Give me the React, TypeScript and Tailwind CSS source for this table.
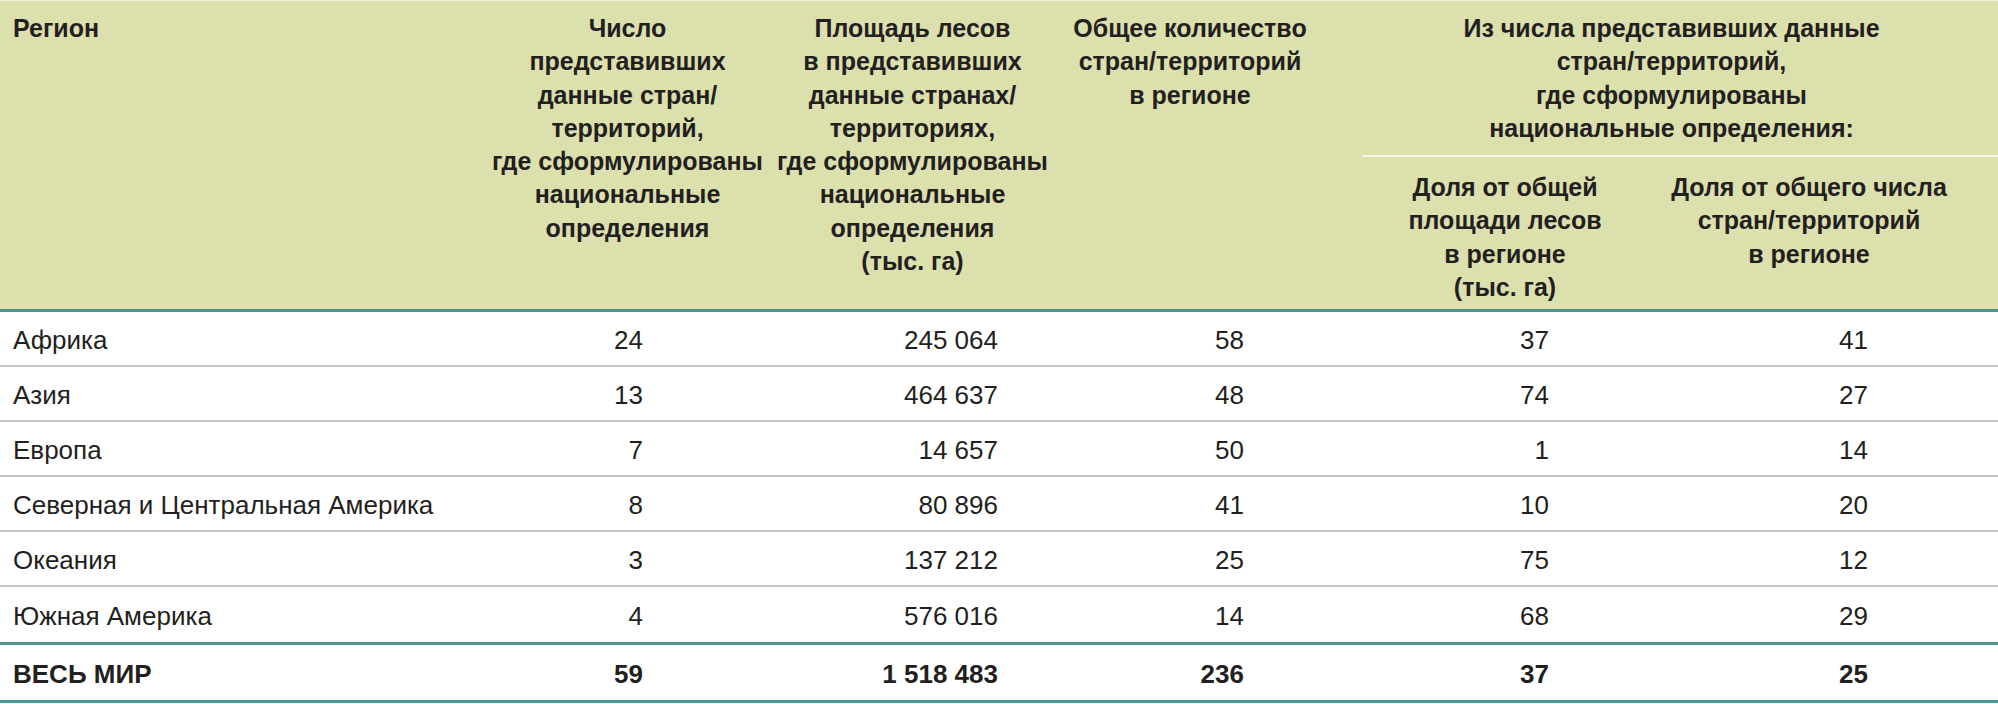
import React from 'react'

const rows = [
  ['Африка', '24', '245 064', '58', '37', '41'],
  ['Азия', '13', '464 637', '48', '74', '27'],
  ['Европа', '7', '14 657', '50', '1', '14'],
  ['Северная и Центральная Америка', '8', '80 896', '41', '10', '20'],
  ['Океания', '3', '137 212', '25', '75', '12'],
  ['Южная Америка', '4', '576 016', '14', '68', '29'],
]

const total = ['ВЕСЬ МИР', '59', '1 518 483', '236', '37', '25']

// widths of the six columns and the right padding that lines the figures up
const cols = [
  'w-[490px] pl-[13px] text-left',
  'w-[275px] pr-[122px] text-right',
  'w-[295px] pr-[62px] text-right',
  'w-[285px] pr-[101px] text-right',
  'w-[320px] pr-[116px] text-right',
  'w-[333px] pr-[130px] text-right',
]

function Row({ cells, bold, last }: { cells: string[]; bold?: boolean; last?: boolean }) {
  return (
    <div
      className={`flex h-[55px] items-center ${
        last ? '' : 'border-b-2 border-[#c4c4c4]'
      } ${bold ? 'font-bold' : ''}`}
    >
      {cells.map((c, i) => (
        <div key={i} className={`${cols[i]} pt-[3px]`}>
          {c}
        </div>
      ))}
    </div>
  )
}

export default function App() {
  return (
    <div className="w-[1998px] h-[704px] bg-[#fbf6e9] font-['Liberation_Sans_Narrow','Liberation_Sans',sans-serif] text-[26px] text-[#231f20]">
      {/* Header */}
      <div className="flex h-[309px] bg-[#dbe0ad] font-bold text-[25px] leading-[33.3px] border-t border-[#eef0d8]">
        <div className="w-[490px] pl-[13px] pt-[11px]">Регион</div>
        <div className="w-[275px] pt-[11px] text-center">
          Число
          <br />
          представивших
          <br />
          данные стран/
          <br />
          территорий,
          <br />
          где сформулированы
          <br />
          национальные
          <br />
          определения
        </div>
        <div className="w-[295px] pt-[11px] text-center">
          Площадь лесов
          <br />
          в представивших
          <br />
          данные странах/
          <br />
          территориях,
          <br />
          где сформулированы
          <br />
          национальные
          <br />
          определения
          <br />
          (тыс. га)
        </div>
        <div className="w-[285px] pt-[11px] pr-[25px] text-center">
          Общее количество
          <br />
          стран/территорий
          <br />в регионе
        </div>
        <div className="w-[653px] flex flex-col">
          <div className="pt-[11px] pb-[10px] text-center">
            Из числа представивших данные
            <br />
            стран/территорий,
            <br />
            где сформулированы
            <br />
            национальные определения:
          </div>
          <div className="ml-[17px] h-[2px] bg-[#f6f6e8]" />
          <div className="flex pt-[14px]">
            <div className="w-[320px] text-center">
              Доля от общей
              <br />
              площади лесов
              <br />в регионе
              <br />
              (тыс. га)
            </div>
            <div className="w-[333px] pr-[45px] text-center">
              Доля от общего числа
              <br />
              стран/территорий
              <br />в регионе
            </div>
          </div>
        </div>
      </div>
      <div className="h-[3px] bg-[#4a978f]" />

      {/* Body */}
      <div className="bg-white">
        {rows.map((r, i) => (
          <Row key={r[0]} cells={r} last={i === rows.length - 1} />
        ))}
        <div className="h-[3px] bg-[#4a978f]" />
        <Row cells={total} bold last />
        <div className="h-[3px] bg-[#4a978f]" />
      </div>
    </div>
  )
}
